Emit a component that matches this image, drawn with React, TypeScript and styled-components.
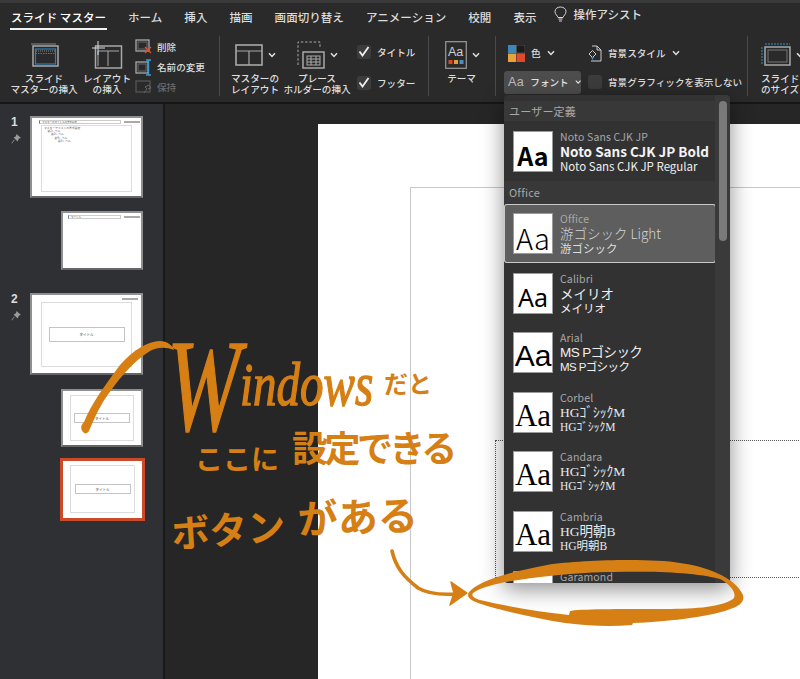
import React from "react";
import styled, { createGlobalStyle, css } from "styled-components";

const Global = createGlobalStyle`
  html, body { margin: 0; padding: 0; background: #262626; }
  #root { width: 800px; height: 679px; overflow: hidden; position: relative; }
  * { box-sizing: border-box; }
`;
const JP = `"Noto Sans CJK JP", "Noto Sans", sans-serif`;

const Page = styled.div`
  width: 800px; height: 679px; position: relative; overflow: hidden;
  display: flex; flex-direction: column; font-family: ${JP}; color: #ddd;
`;
const Ribbon = styled.header`
  height: 104px; flex: none; background: #2a2a2a;
  border-top: 3px solid #3a3a3a; border-bottom: 2px solid #161616;
  display: flex; flex-direction: column;
`;
const TabBar = styled.nav`
  height: 33px; display: flex; align-items: flex-start; padding: 6px 0 0 11px; gap: 22px;
  flex: none;
`;
const Tab = styled.div<{ $active?: boolean }>`
  font-size: 11.5px; line-height: 17px; color: #dcdcdc; white-space: nowrap; font-weight: 500;
  letter-spacing: 0.05px; height: 21px;
  ${p => p.$active && css`color: #fff; border-bottom: 2px solid #f2f2f2; padding: 0 1px; margin: 0 -1px 0 -1px;`}
`;
const Assist = styled.div`
  display: flex; align-items: center; gap: 7px; margin-left: -5px; margin-top: -3px;
  font-size: 11.5px; font-weight: 500; line-height: 17px; color: #dcdcdc;
`;
const Tools = styled.div`display: flex; height: 60px; flex: none;`;
const Group = styled.section<{ $w: number; $pl?: number; $last?: boolean }>`
  width: ${p => p.$w}px; flex: none; height: 60px; display: flex; padding-left: ${p => p.$pl ?? 0}px;
  border-right: 1px solid ${p => (p.$last ? "transparent" : "#4a4a4a")};
`;
const Big = styled.div<{ $w: number; $ml?: number; $start?: number }>`
  width: ${p => p.$w}px; margin-left: ${p => p.$ml ?? 0}px; flex: none; display: flex; flex-direction: column;
  align-items: ${p => (p.$start !== undefined ? "flex-start" : "center")};
  padding-left: ${p => p.$start ?? 0}px;
`;
const IconRow = styled.div`
  height: 37px; display: flex; align-items: center; justify-content: center; gap: 5px; flex: none;
`;
const Label = styled.div<{ $left?: boolean }>`
  font-size: 9.6px; line-height: 10.5px; text-align: ${p => (p.$left ? "left" : "center")}; color: #dedede; white-space: nowrap; font-weight: 500;
`;
const Stack = styled.div`
  margin-left: 3px; display: flex; flex-direction: column; padding-top: 2px; gap: 2.5px;
`;
const SmallBtn = styled.div<{ $off?: boolean }>`
  display: flex; align-items: center; gap: 5px; height: 18px;
  font-size: 9.6px; font-weight: 500; white-space: nowrap; color: ${p => (p.$off ? "#6a6a6a" : "#dedede")};
`;
const Checks = styled.div`
  margin-left: 7px; display: flex; flex-direction: column; gap: 18px; padding-top: 9px;
`;
const CheckRow = styled.div`
  display: flex; align-items: center; gap: 6px; height: 13px; font-size: 9.6px; font-weight: 500; white-space: nowrap; color: #dedede;
`;
const Box = styled.span`
  width: 14px; height: 14px; border-radius: 3px; background: #3c3c3c; flex: none; display: flex; align-items: center; justify-content: center;
`;
const DesignGrid = styled.div`
  display: grid; grid-template-columns: 84px auto; grid-template-rows: 34px 24px; margin-left: 8px; align-items: center;
`;
const Inline = styled.div<{ $pl?: number }>`
  display: flex; align-items: center; gap: 6px; padding-left: ${p => p.$pl ?? 0}px;
  font-size: 9.6px; font-weight: 500; white-space: nowrap; color: #dedede;
`;
const FontBtn = styled.div`
  width: 77px; height: 23px; background: #4d4d4d; border-radius: 3px; display: flex; align-items: center;
  padding-left: 4px; font-size: 9.6px; font-weight: 500; color: #e4e4e4; gap: 6px; white-space: nowrap;
`;
const FontAa = styled.span`font-family: "Liberation Sans", sans-serif; font-size: 12.5px; color: #bdbdbd; letter-spacing: .5px;`;

const Body = styled.main`flex: 1; display: flex; min-height: 0;`;
const Sidebar = styled.aside`
  width: 163px; flex: none; background: #2f3034; padding-top: 12px; border-right: 0;
  display: flex; flex-direction: column;
`;
const MasterRow = styled.div<{ $mt?: number }>`
  display: flex; margin-top: ${p => p.$mt ?? 0}px; flex: none;
`;
const NumCol = styled.div`
  width: 30px; flex: none; padding: 0 0 0 11px; margin-top: -2px; display: flex; flex-direction: column; gap: 4px;
  font-family: "Liberation Sans", sans-serif; font-size: 12px; font-weight: 700; line-height: 16px; color: #dcdcdc;
`;
const Thumb = styled.div<{ $w: number; $h: number; $ml?: number; $mt?: number; $sel?: boolean }>`
  width: ${p => p.$w}px; height: ${p => p.$h}px; margin-left: ${p => p.$ml ?? 0}px; margin-top: ${p => p.$mt ?? 0}px;
  flex: none; background: #fff; display: flex; flex-direction: column;
  border: ${p => (p.$sel ? "3px solid #cb4a2a" : "2px solid #8f8f8f")};
  border-bottom-color: ${p => (p.$sel ? "#cb4a2a" : "#666")};
  color: #555;
`;
const MiniHead = styled.div<{ $pl: number }>`
  height: 6px; padding: 1px 1px 0 ${p => p.$pl}px; display: flex; align-items: center; font-size: 3px; line-height: 3px; gap: 3px; flex: none;
`;
const MiniTitleBox = styled.div`
  flex: 1; height: 4px; border: 1px solid #ccc; border-left: 1px solid #5b7fa8; font-size: 2.5px; line-height: 2px; padding-left: 2px; white-space: nowrap; overflow: hidden;
`;
const MiniLogo = styled.span`width: 16px; height: 2px; background: #aaa; flex: none;`;
const MiniFrame = styled.div<{ $mx: number; $mt: number; $mb: number }>`
  flex: 1; margin: ${p => `${p.$mt}px ${p.$mx}px ${p.$mb}px`}; border: 1px solid #dcdcdc; display: flex;
  flex-direction: column; align-items: center; justify-content: center; min-height: 0;
`;
const MiniCenter = styled.div<{ $w: number; $h: number }>`
  width: ${p => p.$w}px; height: ${p => p.$h}px; border: 1px solid #c4c4c4; font-size: 3.5px; display: flex; align-items: center; justify-content: center; color: #444; white-space: nowrap;
`;
const MiniList = styled.div`
  align-self: stretch; flex: 1; font-size: 2.8px; line-height: 3.2px; padding: 1px 2px; color: #666; white-space: nowrap;
`;
const MiniLine = styled.div<{ $i: number }>`padding-left: ${p => p.$i * 3.5}px;`;

const Gutter = styled.div`width: 2px; flex: none; background: #191919;`;
const Canvas = styled.div`
  flex: 1; background: #262626; padding: 20px 0 0 153px; min-width: 0; display: flex;
`;
const Slide = styled.div`
  flex: 1; background: #fff; padding: 63px 0 0 92px; min-width: 0; overflow: hidden;
`;
const SlideFrame = styled.div`
  width: 520px; height: 600px; border: 1px solid #c8c8c8; padding: 252px 0 0 84px;
`;
const SlideBox = styled.div`
  width: 500px; height: 138px; border: 1px dotted #555;
`;

const Dropdown = styled.div`
  position: absolute; left: 504px; top: 95px; width: 226px; height: 488px; background: #323232; border-radius: 4px;
  box-shadow: 0 6px 22px rgba(0,0,0,.45); display: flex; overflow: hidden; padding-top: 6px;
`;
const ListCol = styled.div`width: 212px; flex: none; display: flex; flex-direction: column;`;
const Track = styled.div`
  position: absolute; right: 0; top: 0; bottom: 0; width: 15px; background: #3a3a3a; padding: 6px 3px 0 4px;
`;
const ThumbBar = styled.div`width: 8px; height: 140px; border-radius: 4px; background: #7a7a7a;`;
const Head = styled.div<{ $h: number }>`
  height: ${p => p.$h}px; flex: none; padding: 0 0 0 5px; display: flex; align-items: center; margin-right: -1px;
  font-size: 11px; color: #a8a8a8; background: #383838; letter-spacing: .2px;
`;
const Row = styled.div<{ $sel?: boolean }>`
  height: 59.6px; flex: none; display: flex; gap: 7px; padding: 9.5px 0 0 9px; border-radius: 3px;
  ${p => p.$sel && css`background: #5e5e5e; box-shadow: inset 0 0 0 1px #c9c9c9; `}
`;
const Swatch = styled.div`
  width: 40px; height: 41px; background: #fff; border: 1px solid #9a9a9a; flex: none; color: #000;
  display: flex; align-items: flex-end; justify-content: center; overflow: hidden;
`;
const Aa = styled.span<{ $font: string; $weight: number; $size: number }>`
  font-family: ${p => p.$font}; font-weight: ${p => p.$weight}; font-size: ${p => p.$size}px; line-height: 32px; white-space: nowrap;
`;
const Info = styled.div`display: flex; flex-direction: column; min-width: 0; white-space: nowrap;`;
const FaceName = styled.div`font-size: 10.5px; line-height: 14px; color: #a8a8a8; font-family: ${JP}; letter-spacing: .15px; margin-top: -1px;`;
const Major = styled.div<{ $font: string; $weight: number; $color: string; $gap?: number }>`
  font-family: ${p => p.$font}; font-weight: ${p => p.$weight}; color: ${p => p.$color}; font-size: 13.5px; line-height: 15px;
  letter-spacing: ${p => p.$gap ?? 0}px;
`;
const Minor = styled.div<{ $font: string; $weight: number; $color: string; $gap?: number }>`
  font-family: ${p => p.$font}; font-weight: ${p => p.$weight}; color: ${p => p.$color}; font-size: 11.5px; line-height: 14px;
  letter-spacing: ${p => p.$gap ?? 0}px;
`;

const Ink = styled.svg`position: absolute; left: 0; top: 0; width: 800px; height: 679px; pointer-events: none;`;
const Script = styled.span<{ $x: number; $y: number; $size: number; $rot?: number; $gap?: number; $latin?: boolean; $sx?: number; $sy?: number }>`
  position: absolute; left: ${p => p.$x}px; top: ${p => p.$y}px; font-size: ${p => p.$size}px; line-height: 1;
  white-space: nowrap; color: #d67f14; transform-origin: left top;
  transform: rotate(${p => p.$rot ?? 0}deg) scale(${p => p.$sx ?? 1}, ${p => p.$sy ?? 1});
  letter-spacing: ${p => p.$gap ?? 0}px; pointer-events: none;
  font-family: ${p => (p.$latin ? `"Liberation Serif", serif` : JP)};
  font-style: ${p => (p.$latin ? "italic" : "normal")};
  font-weight: ${p => (p.$latin ? 400 : 700)};
  ${p => p.$latin && css`-webkit-text-stroke: 1.1px #d67f14;`}
`;

const Chevron = () => (
  <svg width="8" height="6" viewBox="0 0 8 6" fill="none"><path d="M1 1.2 4 4.4 7 1.2" stroke="#e0e0e0" strokeWidth="1.5" /></svg>
);
const G = "#a8a8a8";
const IconMaster = () => (
  <svg width="29" height="24" viewBox="0 0 29 24" fill="none">
    <path d="M1 1H26" stroke="#888" /><rect x="3" y="3" width="25" height="20" stroke={G} strokeWidth="1.5" />
    <rect x="5.5" y="6" width="20" height="15" stroke="#2e7fb8" strokeWidth="1.2" /><path d="M5.5 10.5H25.5" stroke="#2e7fb8" strokeDasharray="1.5 1" />
    <path d="M6 8H25" stroke="#888" strokeDasharray="1 1" />
  </svg>
);
const IconLayoutPlus = () => (
  <svg width="31" height="30" viewBox="0 0 31 30" fill="none">
    <rect x="3.5" y="6" width="26" height="22" stroke={G} strokeWidth="1.5" /><path d="M6 11H27M16 11V26M6 11V26" stroke={G} />
    <path d="M6 1V15M0 8H13" stroke="#cfe0e6" strokeWidth="1" />
  </svg>
);
const IconDelete = () => (
  <svg width="17" height="15" viewBox="0 0 17 15" fill="none">
    <rect x="1" y="1" width="13" height="11" stroke={G} strokeWidth="1.3" /><rect x="3" y="3" width="9" height="7" stroke="#666" />
    <path d="M10 8 16 14M16 8 10 14" stroke="#e0502a" strokeWidth="1.3" />
  </svg>
);
const IconRename = () => (
  <svg width="17" height="17" viewBox="0 0 17 17" fill="none">
    <rect x="1" y="3" width="12" height="11" stroke={G} strokeWidth="1.3" /><rect x="3" y="5" width="8" height="7" stroke="#666" />
    <path d="M11 1H16M13.5 1V16M11 16H16" stroke="#3d9ad1" strokeWidth="1.4" />
  </svg>
);
const IconKeep = () => (
  <svg width="17" height="15" viewBox="0 0 17 15" fill="none">
    <rect x="1" y="1" width="14" height="11" stroke="#555" strokeWidth="1.3" /><path d="M9 13 12 9 10 7 14 5 16 8 13 9" stroke="#666" />
  </svg>
);
const IconMasterLayout = () => (
  <svg width="28" height="22" viewBox="0 0 28 22" fill="none">
    <rect x="1" y="1" width="26" height="20" stroke={G} strokeWidth="1.6" /><path d="M1 7H27M14 7V21" stroke={G} strokeWidth="1.2" />
  </svg>
);
const IconPlaceholder = () => (
  <svg width="28" height="28" viewBox="0 0 28 28" fill="none">
    <path d="M1 24V1H23V6" stroke={G} strokeDasharray="2.5 1.8" />
    <rect x="6" y="11" width="21" height="16" stroke={G} strokeWidth="1.5" />
    <rect x="10" y="15" width="13" height="9" stroke="#aaa" /><path d="M10 18H23M10 21H23M14 15V24M19 15V24" stroke="#aaa" />
  </svg>
);
const IconBulb = () => (
  <svg width="13" height="17" viewBox="0 0 13 17" fill="none">
    <path d="M4 11.5C3.5 9.5 1 8.5 1 5.5 1 2.8 3.4 1 6.5 1S12 2.8 12 5.5C12 8.5 9.5 9.5 9 11.5Z" stroke="#d8d8d8" /><path d="M4.5 13H8.5M5 15H8" stroke="#d8d8d8" />
  </svg>
);
const IconTheme = () => (
  <svg width="22" height="28" viewBox="0 0 22 28" fill="none">
    <rect x=".7" y=".7" width="20.6" height="26.6" stroke="#9a9a9a" strokeWidth="1.2" />
    <text x="3" y="15" fontFamily="Liberation Sans, sans-serif" fontSize="12.5" fill="#d0d0d0">Aa</text>
    <rect x="3.5" y="19" width="4" height="4" fill="#d9462a" /><rect x="9" y="19" width="4" height="4" fill="#e0a03a" /><rect x="14.5" y="19" width="4" height="4" fill="#4a8fc0" />
  </svg>
);
const IconColors = () => (
  <svg width="17" height="17" viewBox="0 0 17 17">
    <rect width="8" height="8" fill="#3f86b8" /><rect x="8.5" width="8.5" height="8" fill="#1c1c1c" stroke="#777" strokeWidth=".5" />
    <rect y="8.5" width="8" height="8.5" fill="#e8a23c" /><rect x="8.5" y="8.5" width="8.5" height="8.5" fill="#df4a2a" />
  </svg>
);
const IconBg = () => (
  <svg width="14" height="17" viewBox="0 0 14 17" fill="none">
    <path d="M4 1H9L13 5V16H3" stroke="#ccc" /><path d="M9 1V5H13" stroke="#ccc" />
    <path d="M1 9 4.5 5.5 8 9 4.5 12.5Z" stroke="#ccc" /><path d="M3 12 4.5 15 6 12Z" fill="#3a8fc8" />
  </svg>
);
const IconSize = () => (
  <svg width="30" height="23" viewBox="0 0 30 23" fill="none">
    <path d="M4 1H29M1 4V22" stroke="#2e8fc8" strokeDasharray="2 1" /><rect x="4" y="4" width="25" height="18" stroke={G} strokeWidth="1.5" /><rect x="7" y="7" width="19" height="12" stroke="#777" />
  </svg>
);
const IconPin = () => (
  <svg width="10" height="10" viewBox="0 0 10 10"><path d="M5.5 0 10 4 8 4.6 6.6 7.5 2.6 3.6 5 2.2ZM3.6 6 1 9.5 0.5 9 3.2 5.6Z" fill="#9a9a9a" /></svg>
);
const Tick = () => (
  <svg width="12" height="11" viewBox="0 0 12 11" fill="none"><path d="M1.5 5.5 4.5 9.5 10.5 1" stroke="#f0f0f0" strokeWidth="1.8" /></svg>
);

const SANS = `"Liberation Sans", "Noto Sans CJK JP", sans-serif`;
const SERIF = `"Liberation Serif", "Noto Sans CJK JP", serif`;
const rows = [
  { n: "Calibri", a: "メイリオ", b: "メイリオ", aa: { f: `"Noto Sans", sans-serif`, w: 400, s: 25 }, mf: JP, mw: 400, c: "#f0f0f0", gap: 0 },
  { n: "Arial", a: "MS Pゴシック", b: "MS Pゴシック", aa: { f: SANS, w: 400, s: 30 }, mf: SANS, mw: 400, c: "#f0f0f0", gap: -0.6 },
  { n: "Corbel", a: "HGｺﾞｼｯｸM", b: "HGｺﾞｼｯｸM", aa: { f: SERIF, w: 400, s: 31 }, mf: SERIF, mw: 400, c: "#e8e8e8", gap: 0 },
  { n: "Candara", a: "HGｺﾞｼｯｸM", b: "HGｺﾞｼｯｸM", aa: { f: SERIF, w: 400, s: 31 }, mf: SERIF, mw: 400, c: "#e8e8e8", gap: 0 },
  { n: "Cambria", a: "HG明朝B", b: "HG明朝B", aa: { f: SERIF, w: 400, s: 31 }, mf: SERIF, mw: 400, c: "#e8e8e8", gap: 0 },
  { n: "Garamond", a: "HG明朝B", b: "HG明朝B", aa: { f: SERIF, w: 400, s: 31 }, mf: SERIF, mw: 400, c: "#e8e8e8", gap: 0 },
];

export default function App() {
  return (
    <Page>
      <Global />
      <Ribbon>
        <TabBar>
          <Tab $active>スライド マスター</Tab><Tab>ホーム</Tab><Tab>挿入</Tab><Tab>描画</Tab><Tab>画面切り替え</Tab>
          <Tab>アニメーション</Tab><Tab>校閲</Tab><Tab>表示</Tab>
          <Assist><IconBulb />操作アシスト</Assist>
        </TabBar>
        <Tools>
          <Group $w={220} $pl={11}>
            <Big $w={66}><IconRow><IconMaster /></IconRow><Label>スライド<br />マスターの挿入</Label></Big>
            <Big $w={50} $ml={5}><IconRow><IconLayoutPlus /></IconRow><Label>レイアウト<br />の挿入</Label></Big>
            <Stack>
              <SmallBtn><IconDelete />削除</SmallBtn>
              <SmallBtn><IconRename />名前の変更</SmallBtn>
              <SmallBtn $off><IconKeep />保持</SmallBtn>
            </Stack>
          </Group>
          <Group $w={209} $pl={12}>
            <Big $w={46}><IconRow><IconMasterLayout /><Chevron /></IconRow><Label>マスターの<br />レイアウト</Label></Big>
            <Big $w={66} $ml={6}><IconRow><IconPlaceholder /><Chevron /></IconRow><Label>プレース<br />ホルダーの挿入</Label></Big>
            <Checks>
              <CheckRow><Box><Tick /></Box>タイトル</CheckRow>
              <CheckRow><Box><Tick /></Box>フッター</CheckRow>
            </Checks>
          </Group>
          <Group $w={67}>
            <Big $w={66} $start={16}><IconRow><IconTheme /><Chevron /></IconRow><Label>&nbsp;テーマ</Label></Big>
          </Group>
          <Group $w={252}>
            <DesignGrid>
              <Inline $pl={4}><IconColors />色<Chevron /></Inline>
              <Inline><IconBg />背景スタイル<Chevron /></Inline>
              <FontBtn><FontAa>Aa</FontAa>フォント<Chevron /></FontBtn>
              <Inline><Box />背景グラフィックを表示しない</Inline>
            </DesignGrid>
          </Group>
          <Group $w={52} $pl={13} $last>
            <Big $w={39} $start={0}><IconRow><IconSize /><Chevron /></IconRow><Label $left>スライド<br />のサイズ</Label></Big>
          </Group>
        </Tools>
      </Ribbon>
      <Body>
        <Sidebar>
          <MasterRow>
            <NumCol>1<IconPin /></NumCol>
            <Thumb $w={113} $h={82}>
              <MiniHead $pl={7}><MiniTitleBox>マスターのタイトルの書式設定</MiniTitleBox><MiniLogo /></MiniHead>
              <MiniFrame $mx={9} $mt={1} $mb={4}>
                <MiniList>
                  マスターテキストの書式設定
                  <MiniLine $i={1}>第2レベル</MiniLine><MiniLine $i={2}>第3レベル</MiniLine>
                  <MiniLine $i={3}>第4レベル</MiniLine><MiniLine $i={4}>第5レベル</MiniLine>
                </MiniList>
              </MiniFrame>
            </Thumb>
          </MasterRow>
          <Thumb $w={82} $h={59} $ml={61} $mt={13}>
            <MiniHead $pl={5}><MiniTitleBox>タイトル</MiniTitleBox><MiniLogo /></MiniHead>
          </Thumb>
          <MasterRow $mt={23}>
            <NumCol>2<IconPin /></NumCol>
            <Thumb $w={113} $h={82}>
              <MiniHead $pl={90}><MiniLogo /></MiniHead>
              <MiniFrame $mx={9} $mt={1} $mb={6}><MiniCenter $w={76} $h={15}>タイトル</MiniCenter></MiniFrame>
            </Thumb>
          </MasterRow>
          <Thumb $w={82} $h={58} $ml={61} $mt={14}>
            <MiniFrame $mx={7} $mt={4} $mb={4}><MiniCenter $w={56} $h={10}>タイトル</MiniCenter></MiniFrame>
          </Thumb>
          <Thumb $w={85} $h={63} $ml={60} $mt={11} $sel>
            <MiniFrame $mx={7} $mt={4} $mb={5}><MiniCenter $w={56} $h={10}>タイトル</MiniCenter></MiniFrame>
          </Thumb>
        </Sidebar>
        <Gutter />
        <Canvas>
          <Slide><SlideFrame><SlideBox /></SlideFrame></Slide>
        </Canvas>
      </Body>

      <Dropdown>
        <ListCol>
          <Head $h={20}>ユーザー定義</Head>
          <Row>
            <Swatch><Aa $font={JP} $weight={700} $size={25}>Aa</Aa></Swatch>
            <Info>
              <FaceName>Noto Sans CJK JP</FaceName>
              <Major $font={JP} $weight={700} $color="#f4f4f4">Noto Sans CJK JP Bold</Major>
              <Minor $font={JP} $weight={400} $color="#f0f0f0">Noto Sans CJK JP Regular</Minor>
            </Info>
          </Row>
          <Head $h={23}>Office</Head>
          <Row $sel>
            <Swatch><Aa $font={JP} $weight={300} $size={29}>Aa</Aa></Swatch>
            <Info>
              <FaceName>Office</FaceName>
              <Major $font={JP} $weight={300} $color="#d4d4d4">游ゴシック Light</Major>
              <Minor $font={JP} $weight={400} $color="#dcdcdc">游ゴシック</Minor>
            </Info>
          </Row>
          {rows.map(r => (
            <Row key={r.n}>
              <Swatch><Aa $font={r.aa.f} $weight={r.aa.w} $size={r.aa.s}>Aa</Aa></Swatch>
              <Info>
                <FaceName>{r.n}</FaceName>
                <Major $font={r.mf} $weight={r.mw} $color={r.c} $gap={r.gap}>{r.a}</Major>
                <Minor $font={r.mf} $weight={r.mw} $color={r.c} $gap={r.gap}>{r.b}</Minor>
              </Info>
            </Row>
          ))}
        </ListCol>
        <Track><ThumbBar /></Track>
      </Dropdown>

      <Ink viewBox="0 0 800 679">
        <path d="M83 432C80 428 81 425 84 422C92 403 103 388 120 365C133 350 148 341 160 341C167 341 172 345 174 350C166 347 158 347 150 351C132 362 116 382 103 402C96 414 92 424 89 431C87 434 85 434 83 432Z" fill="#d67f14" />
        <path d="M392 551C396 568 404 577 418 588C428 594 440 595 456 594" stroke="#d67f14" strokeWidth="3.6" fill="none" strokeLinecap="round" />
        <path d="M451 582 467 593 450 605 454 593Z" fill="#d67f14" stroke="#d67f14" strokeWidth="1.5" strokeLinejoin="round" />
        <path fillRule="evenodd" fill="#d67f14" d="M469 592C478 582 500 574 547 565C580 560 650 558 680 563C705 566 735 577 743 595C745 604 737 607 725 611C705 617 665 622 633 623L632 625C610 627 590 626 565 623C530 617 495 609 478 603C470 600 466 597 469 592ZM473 593C471 596 474 598 480 600C505 606 540 612 569 615L570 611C578 609 620 609 660 609C690 609 720 608 733 599C738 594 730 584 720 579C695 572 650 571 613 572C575 572 530 578 505 582C492 585 480 588 473 593Z" />
      </Ink>
      <Script $x={167} $y={320} $size={88} $latin $sy={1.5}>W</Script>
      <Script $x={240} $y={354} $size={47} $latin $sy={1.3}>indows</Script>
      <Script $x={384} $y={371} $size={24}>だと</Script>
      <Script $x={195} $y={444} $size={28}>ここに</Script>
      <Script $x={292} $y={428} $size={36} $gap={-3.5}>設定できる</Script>
      <Script $x={170} $y={513} $size={38} $rot={-4}>ボタン</Script>
      <Script $x={297} $y={497} $size={40} $rot={-2}>がある</Script>
    </Page>
  );
}
